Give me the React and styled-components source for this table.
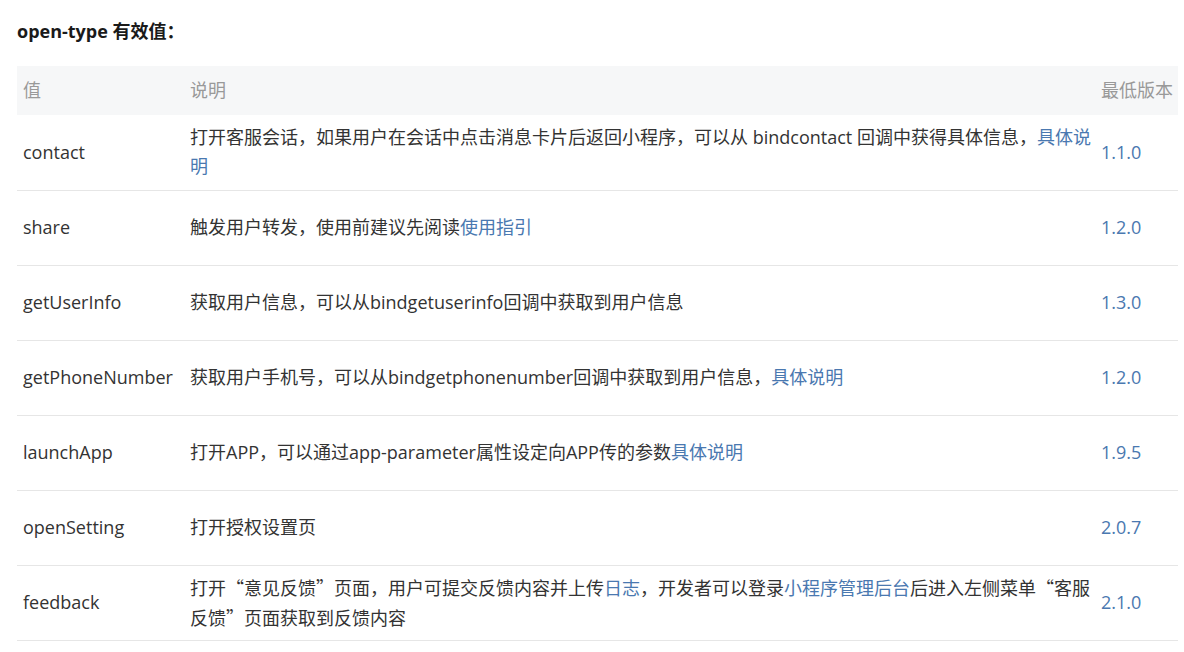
import React from 'react'
import { styled, createGlobalStyle } from 'styled-components'

const GlobalStyle = createGlobalStyle`
  body {
    margin: 0;
    background: #fff;
    font-family: "Open Sans", "Noto Sans CJK SC", sans-serif;
  }
`

const Page = styled.div`
  padding: 17px 6px 0 17px;
  color: #333;
  font-size: 18px;
`

const Title = styled.h4`
  margin: 0 0 21px;
  font-size: 18px;
  font-weight: 700;
  line-height: 28px;
  color: #1a1a1a;
`

const Table = styled.table`
  width: 1161px;
  border-collapse: collapse;
  table-layout: fixed;
`

const HeadCell = styled.th`
  box-sizing: border-box;
  height: 49px;
  padding: 0 0 3px 6px;
  background: #f6f7f8;
  color: #999;
  font-weight: 400;
  text-align: left;
  white-space: nowrap;
  width: ${p => p.$w || 'auto'};
`

const Row = styled.tr`
  border-bottom: 1px solid #e6e6e6;
`

const Cell = styled.td`
  box-sizing: border-box;
  height: 75px;
  padding: 0 0 0 6px;
  line-height: 29px;
  color: ${p => (p.$link ? '#4a78b0' : '#333')};
  white-space: ${p => (p.$nowrap ? 'nowrap' : 'normal')};
`

const Link = styled.a`
  color: #4a78b0;
  text-decoration: none;
`

const Quote = styled.span`
  font-family: "Noto Sans CJK SC", sans-serif;
`

const rows = [
  {
    value: 'contact',
    desc: <>打开客服会话，如果用户在会话中点击消息卡片后返回小程序，可以从 bindcontact 回调中获得具体信息，<Link>具体说明</Link></>,
    ver: '1.1.0',
  },
  { value: 'share', desc: <>触发用户转发，使用前建议先阅读<Link>使用指引</Link></>, ver: '1.2.0' },
  { value: 'getUserInfo', desc: <>获取用户信息，可以从bindgetuserinfo回调中获取到用户信息</>, ver: '1.3.0' },
  {
    value: 'getPhoneNumber',
    desc: <>获取用户手机号，可以从bindgetphonenumber回调中获取到用户信息，<Link>具体说明</Link></>,
    ver: '1.2.0',
  },
  { value: 'launchApp', desc: <>打开APP，可以通过app-parameter属性设定向APP传的参数<Link>具体说明</Link></>, ver: '1.9.5' },
  { value: 'openSetting', desc: <>打开授权设置页</>, ver: '2.0.7' },
  {
    value: 'feedback',
    desc: (
      <>
        打开<Quote>“</Quote>意见反馈<Quote>”</Quote>页面，用户可提交反馈内容并上传<Link>日志</Link>，开发者可以登录
        <Link>小程序管理后台</Link>后进入左侧菜单<Quote>“</Quote>客服反馈<Quote>”</Quote>页面获取到反馈内容
      </>
    ),
    ver: '2.1.0',
  },
]

export default function App() {
  return (
    <>
      <GlobalStyle />
      <Page>
        <Title>open-type 有效值：</Title>
        <Table>
          <thead>
            <tr>
              <HeadCell $w="167px">值</HeadCell>
              <HeadCell>说明</HeadCell>
              <HeadCell $w="83px">最低版本</HeadCell>
            </tr>
          </thead>
          <tbody>
            {rows.map(r => (
              <Row key={r.value}>
                <Cell $nowrap>{r.value}</Cell>
                <Cell>{r.desc}</Cell>
                <Cell $link>{r.ver}</Cell>
              </Row>
            ))}
          </tbody>
        </Table>
      </Page>
    </>
  )
}
